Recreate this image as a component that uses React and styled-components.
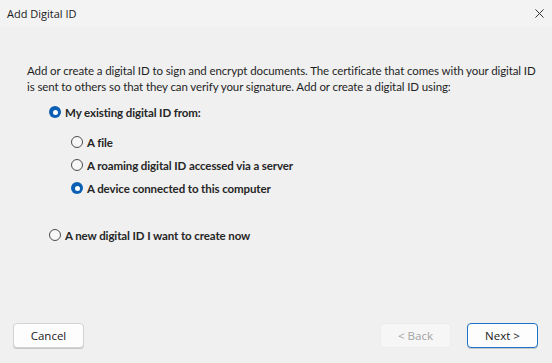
import React from "react";
import styled, { createGlobalStyle } from "styled-components";

const GlobalStyle = createGlobalStyle`
  html, body {
    margin: 0;
    padding: 0;
    background: #f0f0f0;
  }
  #root {
    width: 552px;
    height: 363px;
  }
`;

const Dialog = styled.div`
  width: 552px;
  height: 363px;
  display: flex;
  flex-direction: column;
  background: #f0f0f0;
  overflow: hidden;
`;

const TitleBar = styled.div`
  height: 27px;
  flex: none;
  display: flex;
  align-items: center;
  justify-content: space-between;
  padding: 0 0 0 7px;
  background: #f3f3f3;
  font-family: "Open Sans", "Noto Sans", sans-serif;
  font-size: 11px;
  color: #1a1a1a;
`;

const CloseButton = styled.div`
  width: 26px;
  height: 24px;
  display: flex;
  align-items: center;
  justify-content: center;
  svg {
    width: 9px;
    height: 9px;
  }
`;

const Body = styled.div`
  flex: 1;
  display: flex;
  flex-direction: column;
  padding: 36px 8px 15px 27px;
  font-family: Lato, "Open Sans", sans-serif;
  font-size: 11.5px;
  letter-spacing: -0.1px;
  color: #1f1f1f;
`;

const Intro = styled.p`
  margin: 0;
  width: 514px;
  line-height: 16px;
`;

const Options = styled.div`
  display: flex;
  flex-direction: column;
  margin-top: 8px;
  padding-left: 22px;
`;

const SubOptions = styled.div`
  display: flex;
  flex-direction: column;
  gap: 5px;
  margin: 12px 0 29px 22px;
`;

const RadioRow = styled.label`
  display: flex;
  align-items: center;
  gap: 4px;
  height: 18px;
  font-weight: 700;
  color: #262626;
`;

const RadioCircle = styled.span`
  width: 12px;
  height: 12px;
  box-sizing: border-box;
  border-radius: 50%;
  flex: none;
  border: ${(p) => (p.checked ? "none" : "1px solid #4d4d4d")};
  background: ${(p) => (p.checked ? "#0a5fb4" : "#f7f7f7")};
  display: flex;
  align-items: center;
  justify-content: center;
  &::after {
    content: "";
    display: ${(p) => (p.checked ? "block" : "none")};
    width: 5px;
    height: 5px;
    border-radius: 50%;
    background: #fff;
  }
`;

const Footer = styled.div`
  margin-top: auto;
  display: flex;
  align-items: center;
  margin-left: -14px;
  margin-right: 6px;
`;

const Spacer = styled.div`
  flex: 1;
`;

const Button = styled.button`
  width: 71px;
  height: 25px;
  box-sizing: border-box;
  border-radius: 4px;
  font-family: "Open Sans", "Noto Sans", sans-serif;
  font-size: 11.5px;
  letter-spacing: 0;
  padding: 0;
  margin-left: ${(p) => p.gap || 0}px;
  background: ${(p) => (p.disabled ? "#f6f6f6" : "#fdfdfd")};
  color: ${(p) => (p.disabled ? "#a3a3a3" : "#1b1b1b")};
  border: 1px solid
    ${(p) => (p.primary ? "#1a73c9" : p.disabled ? "#ececec" : "#d3d3d3")};
  box-shadow: ${(p) => (p.disabled ? "none" : "0 1px 0 #c8c8c8")};
`;

function Radio({ checked, children }) {
  return (
    <RadioRow>
      <RadioCircle checked={checked} />
      {children}
    </RadioRow>
  );
}

export default function App() {
  return (
    <Dialog>
      <GlobalStyle />
      <TitleBar>
        <span>Add Digital ID</span>
        <CloseButton>
          <svg viewBox="0 0 10 10">
            <path d="M0.5 0.5 L9.5 9.5 M9.5 0.5 L0.5 9.5" stroke="#333" strokeWidth="1.1" fill="none" />
          </svg>
        </CloseButton>
      </TitleBar>
      <Body>
        <Intro>
          Add or create a digital ID to sign and encrypt documents. The certificate that comes with your digital ID
          is sent to others so that they can verify your signature. Add or create a digital ID using:
        </Intro>
        <Options>
          <Radio checked>My existing digital ID from:</Radio>
          <SubOptions>
            <Radio>A file</Radio>
            <Radio>A roaming digital ID accessed via a server</Radio>
            <Radio checked>A device connected to this computer</Radio>
          </SubOptions>
          <Radio>A new digital ID I want to create now</Radio>
        </Options>
        <Footer>
          <Button>Cancel</Button>
          <Spacer />
          <Button disabled>&lt; Back</Button>
          <Button primary gap={16}>Next &gt;</Button>
        </Footer>
      </Body>
    </Dialog>
  );
}
